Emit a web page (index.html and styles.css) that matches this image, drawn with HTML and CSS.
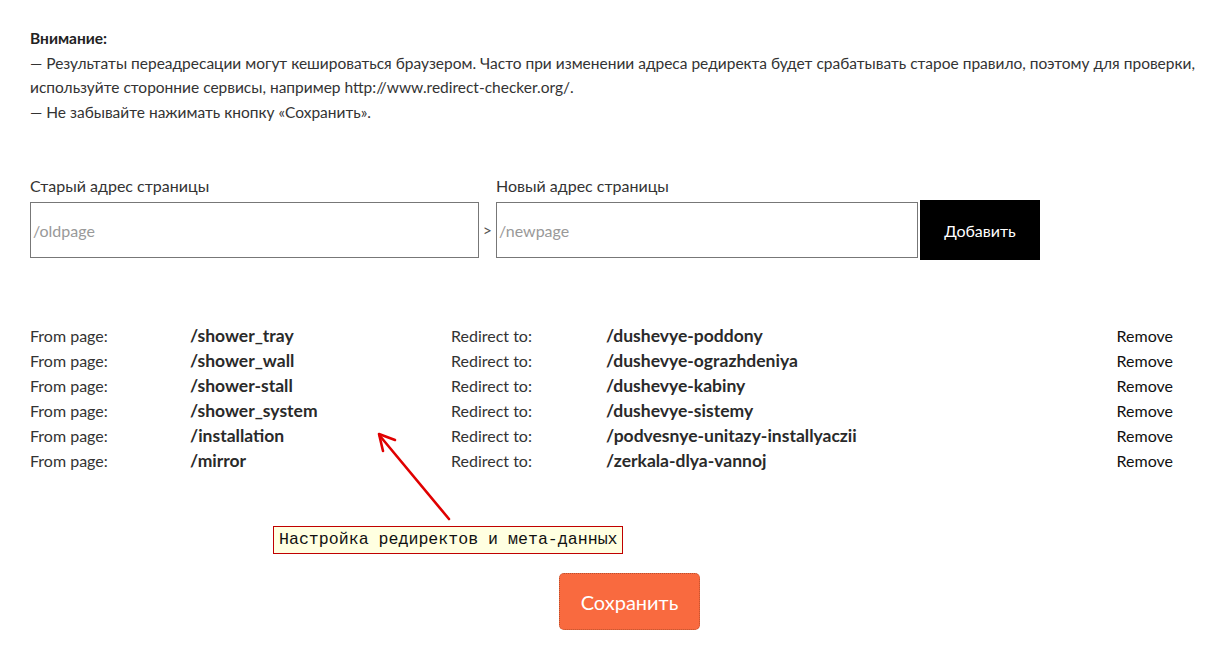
FILE: index.html
```html
<!DOCTYPE html>
<html lang="ru">
<head>
<meta charset="utf-8">
<title>Редиректы</title>
<link rel="stylesheet" href="styles.css">
</head>
<body>
<div class="page">
  <div class="notice">
    <p class="notice-title">Внимание:</p>
    <p>— Результаты переадресации могут кешироваться браузером. Часто при изменении адреса редиректа будет срабатывать старое правило, поэтому для проверки, используйте сторонние сервисы, например http://www.redirect-checker.org/.</p>
    <p>— Не забывайте нажимать кнопку «Сохранить».</p>
  </div>

  <form class="add-form">
    <label class="field field-old">
      <span class="field-label">Старый адрес страницы</span>
      <input class="field-input" type="text" placeholder="/oldpage">
    </label>
    <span class="sep">&gt;</span>
    <label class="field field-new">
      <span class="field-label">Новый адрес страницы</span>
      <input class="field-input" type="text" placeholder="/newpage">
    </label>
    <button class="btn-add" type="button">Добавить</button>
  </form>

  <div class="rules">
    <div class="rule-list">
      <span class="k">From page:</span><span class="v">/shower_tray</span><span class="k">Redirect to:</span><span class="v">/dushevye-poddony</span><span class="rm">Remove</span>
      <span class="k">From page:</span><span class="v">/shower_wall</span><span class="k">Redirect to:</span><span class="v">/dushevye-ograzhdeniya</span><span class="rm">Remove</span>
      <span class="k">From page:</span><span class="v">/shower-stall</span><span class="k">Redirect to:</span><span class="v">/dushevye-kabiny</span><span class="rm">Remove</span>
      <span class="k">From page:</span><span class="v">/shower_system</span><span class="k">Redirect to:</span><span class="v">/dushevye-sistemy</span><span class="rm">Remove</span>
      <span class="k">From page:</span><span class="v">/installation</span><span class="k">Redirect to:</span><span class="v">/podvesnye-unitazy-installyaczii</span><span class="rm">Remove</span>
      <span class="k">From page:</span><span class="v">/mirror</span><span class="k">Redirect to:</span><span class="v">/zerkala-dlya-vannoj</span><span class="rm">Remove</span>
    </div>

    <svg class="callout-arrow" width="90" height="100" viewBox="0 0 90 100">
      <path d="M80 95 L11 12" stroke="#e00000" stroke-width="2.6" fill="none" stroke-linecap="round"/>
      <path d="M14 27 L10 10 L26 16" stroke="#e00000" stroke-width="2.6" fill="none" stroke-linecap="round" stroke-linejoin="round"/>
    </svg>
    <div class="callout">Настройка редиректов и мета-данных</div>
  </div>

  <div class="save-row">
    <button class="btn-save" type="button">Сохранить</button>
  </div>
</div>
</body>
</html>
```

FILE: styles.css
```css
html, body {
  margin: 0;
  padding: 0;
  background: #fff;
}

body {
  font-family: "Lato", "Open Sans", sans-serif;
  font-size: 16px;
  color: #333;
}

.page {
  padding: 26px 0 0 30px;
  width: 1170px;
}

/* notice block */
.notice p {
  margin: 0;
  font-size: 15.5px;
  line-height: 24.5px;
}

.notice-title {
  font-weight: 700;
  color: #222;
}

/* add rule form */
.add-form {
  display: flex;
  align-items: flex-end;
  margin-top: 50px;
}

.field {
  display: flex;
  flex-direction: column;
}

.field-old { width: 449px; }
.field-new { width: 422px; }

.field-label {
  line-height: 24px;
  margin-bottom: 4px;
  color: #333;
}

.field-input {
  box-sizing: border-box;
  height: 56px;
  width: 100%;
  border: 1px solid #777;
  border-radius: 0;
  padding: 0 0 0 2px;
  font-family: inherit;
  font-size: 16px;
  color: #333;
  outline: none;
}

.field-input::placeholder {
  color: #999;
}

.sep {
  width: 17px;
  text-align: center;
  line-height: 56px;
  color: #555;
  font-size: 16px;
}

.btn-add {
  box-sizing: border-box;
  width: 120px;
  height: 60px;
  margin: 0 0 -2px 2px;
  background: #000;
  color: #fff;
  border: 0;
  font-family: inherit;
  font-size: 16px;
  cursor: pointer;
}

/* rules list */
.rules {
  position: relative;
  margin-top: 65px;
  height: 250px;
}

.rule-list {
  display: grid;
  grid-template-columns: 160px 261px 155px 1fr auto;
  width: 1143px;
  line-height: 25px;
}

.k {
  color: #333;
}

.v {
  font-weight: 700;
  font-size: 17.5px;
  color: #2a2a2a;
}

.rm {
  color: #111;
}

.callout-arrow {
  position: absolute;
  left: 339px;
  top: 101px;
}

.callout {
  position: absolute;
  left: 243px;
  top: 203px;
  width: 350px;
  height: 28px;
  box-sizing: border-box;
  background: #ffffe1;
  border: 1px solid #c00000;
  padding-left: 5px;
  font-family: "Liberation Mono", "Courier New", monospace;
  font-size: 16.6px;
  line-height: 26px;
  color: #111;
  white-space: nowrap;
}

/* save */
.save-row {
  display: flex;
  padding-left: 529px;
}

.btn-save {
  box-sizing: border-box;
  width: 141px;
  height: 57px;
  background: #f96a3f;
  border: 1px dotted #b9502e;
  border-radius: 5px;
  color: #fff;
  font-family: inherit;
  font-size: 20px;
  cursor: pointer;
}
```
